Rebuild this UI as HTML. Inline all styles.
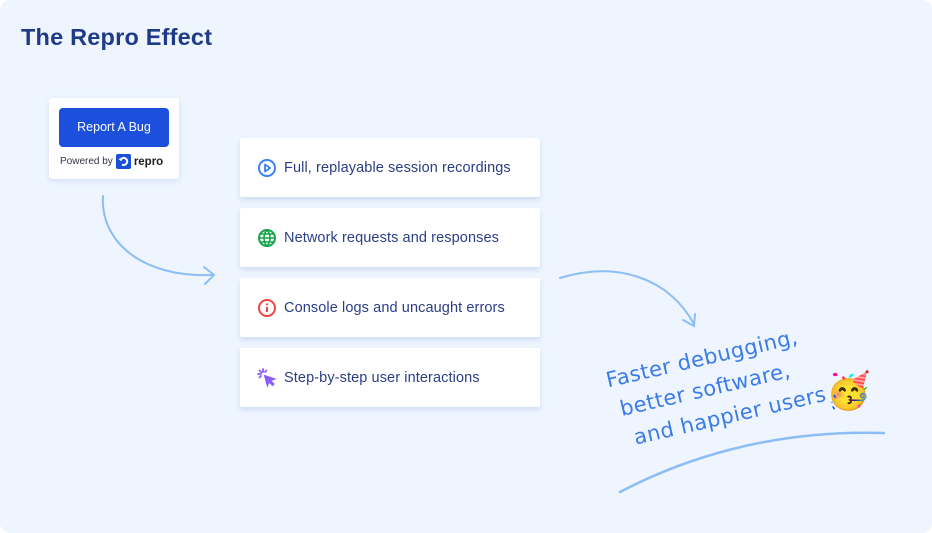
<!DOCTYPE html>
<html><head><style>
body{margin:0;width:932px;height:533px;background:#fff;font-family:"Liberation Sans",sans-serif;overflow:hidden}
.bg{position:absolute;left:0;top:0;width:932px;height:533px;background:#eef5ff;border-radius:10px}
h1{position:absolute;left:21px;top:24px;margin:0;font-size:23.5px;color:#1f3a86;font-weight:bold;letter-spacing:0.2px}
.w{position:absolute;left:49px;top:98px;width:130px;height:81px;background:#fff;border-radius:3px;box-shadow:0 2px 6px rgba(100,130,200,.2)}
.btn{position:absolute;left:10px;top:10px;width:110px;height:39px;background:#1b4fdc;border-radius:4px;color:#fff;font-size:12.5px;text-align:center;line-height:39px}
.pw{position:absolute;left:11px;top:56px;font-size:10px;color:#334;display:flex;align-items:center;gap:3px}
.logo{width:15px;height:15px;background:#1b4fdc;border-radius:2px;display:inline-block;position:relative}
.card{position:absolute;left:240px;width:300px;height:59px;background:#fff;border-radius:2px;box-shadow:0 3px 5px rgba(120,150,200,.25)}
.card svg{position:absolute;left:17px;top:20px}
.card span{position:absolute;left:44px;font-size:14.5px;color:#2b3e85;top:21px;line-height:18px;letter-spacing:0.1px}
.hand{position:absolute;left:603px;top:366px;font-family:"DejaVu Sans",sans-serif;font-size:21px;color:#3b7be8;line-height:31px;transform:rotate(-13deg);transform-origin:0 0;letter-spacing:0.4px}
</style></head><body>
<div class="bg"></div>
<h1>The Repro Effect</h1>
<div class="w"><div class="btn">Report A Bug</div>
<div class="pw">Powered by <span class="logo"><svg width="15" height="15" viewBox="0 0 15 15"><path d="M4.5 6 A3.5 3.5 0 1 1 6 10.5" stroke="#fff" stroke-width="2" fill="none"/><path d="M2.5 5 L5.5 7.5 L6 4z" fill="#fff"/></svg></span><b style="font-size:11.5px;color:#222">repro</b></div></div>

<svg width="932" height="533" style="position:absolute;left:0;top:0" fill="none" stroke="#8dbdf5" stroke-width="2" stroke-linecap="round">
<path d="M103 196 C100 240 140 278 213 275"/><path d="M204 267 L214 275 L205 284"/>
<path d="M560 278 C620 260 670 280 694 324"/><path d="M683 320 L694 326 L695 314"/>
<path d="M620 492 C700 450 790 430 884 433" stroke-width="2.5"/>
</svg>

<div class="card" style="top:138px"><svg width="20" height="20" viewBox="0 0 20 20"><circle cx="10" cy="10" r="8" stroke="#3b82f6" stroke-width="2" fill="none"/><path d="M8 6.5 L13 10 L8 13.5Z" stroke="#3b82f6" stroke-width="1.8" fill="none" stroke-linejoin="round"/></svg><span>Full, replayable session recordings</span></div>
<div class="card" style="top:208px"><svg width="20" height="20" viewBox="0 0 20 20" stroke="#16a34a" stroke-width="2" fill="none"><circle cx="10" cy="10" r="8"/><path d="M2 10H18M10 2C6 6 6 14 10 18M10 2C14 6 14 14 10 18M3.5 6H16.5M3.5 14H16.5" stroke-width="1.6"/></svg><span>Network requests and responses</span></div>
<div class="card" style="top:278px"><svg width="20" height="20" viewBox="0 0 20 20"><circle cx="10" cy="10" r="8" stroke="#ef4444" stroke-width="2" fill="none"/><path d="M10 9V14" stroke="#ef4444" stroke-width="2"/><circle cx="10" cy="6.3" r="1.1" fill="#ef4444"/></svg><span>Console logs and uncaught errors</span></div>
<div class="card" style="top:348px"><svg width="20" height="20" viewBox="0 0 20 20" stroke="#8b5cf6" stroke-width="1.8" fill="none" stroke-linecap="round"><path d="M8 8 L17 11 L13 12.5 L16.5 16 L15.5 17 L12 13.5 L10.5 17Z" fill="#8b5cf6"/><path d="M6 1v3M1 6h3M2.5 2.5l2 2M9.5 2.5l-1.5 1.5M2.5 9.5l1.5-1.5"/></svg><span>Step-by-step user interactions</span></div>

<div class="hand">Faster debugging,<br>&nbsp;better software,<br>&nbsp;&nbsp;and happier users</div>
<div style="position:absolute;left:826px;top:370px;font-size:36px;line-height:42px">🥳</div>
</body></html>
